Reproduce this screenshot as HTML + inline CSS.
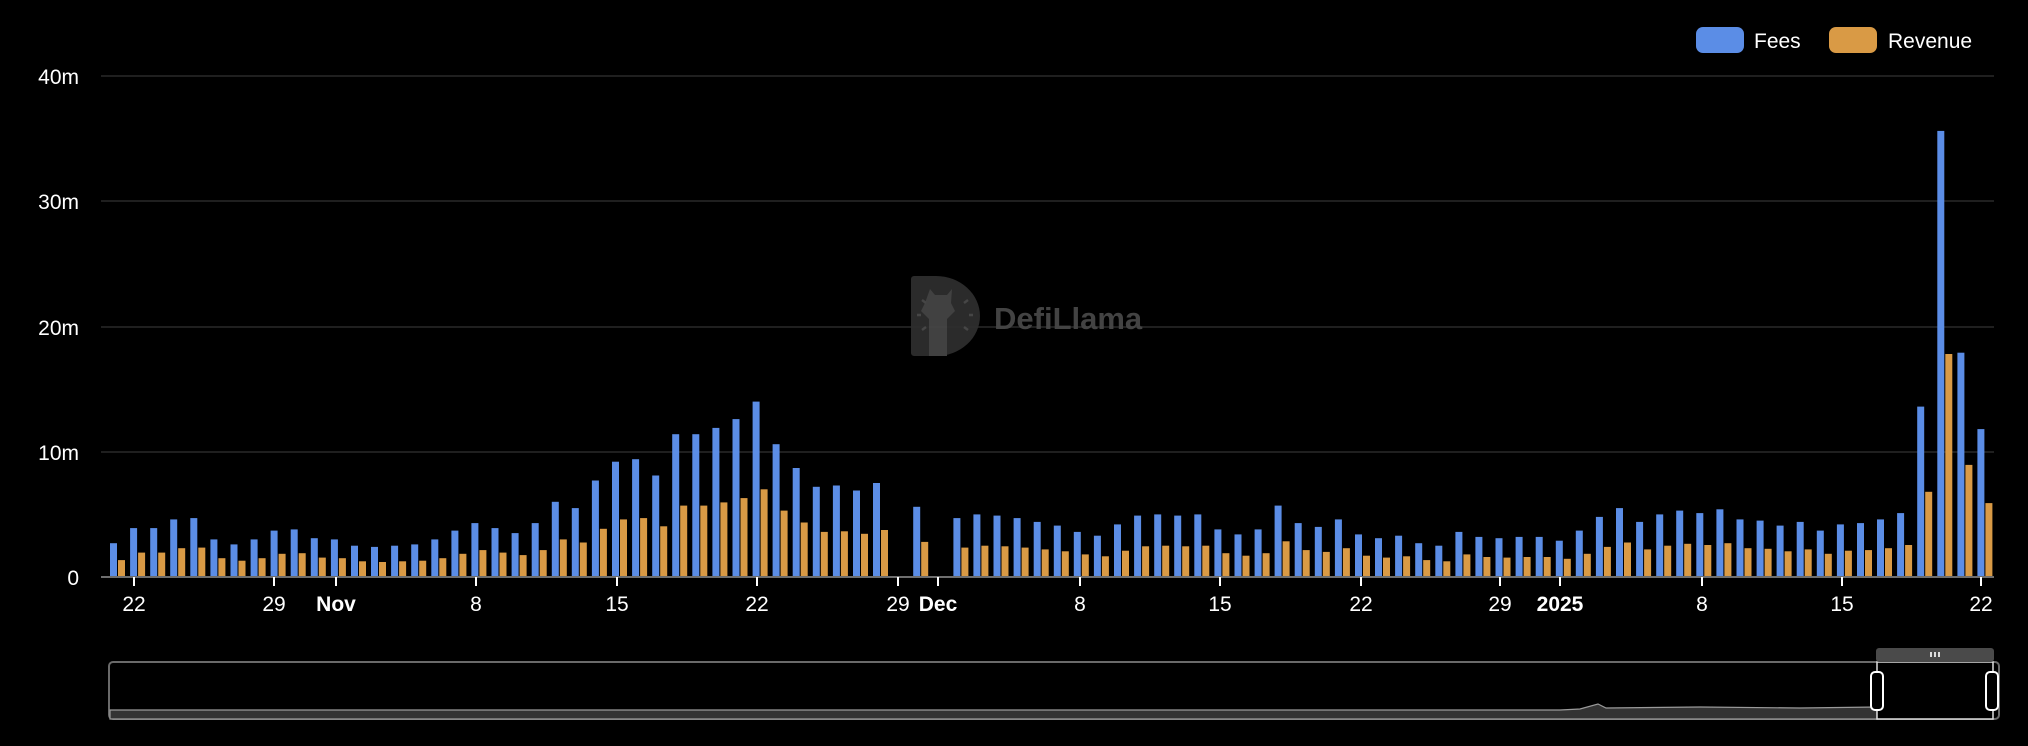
<!DOCTYPE html>
<html><head><meta charset="utf-8"><style>
html,body{margin:0;padding:0;background:#000;width:2028px;height:746px;overflow:hidden}
svg{display:block}
text{font-family:"Liberation Sans",sans-serif}
</style></head><body>
<svg id="s" width="2028" height="746" viewBox="0 0 2028 746" xmlns="http://www.w3.org/2000/svg">
<g stroke="#1f1f1f" stroke-width="2">
<line x1="101" y1="76" x2="1994" y2="76"/><line x1="101" y1="201" x2="1994" y2="201"/>
<line x1="101" y1="327" x2="1994" y2="327"/><line x1="101" y1="452" x2="1994" y2="452"/>
</g>
<g fill="#fff" font-size="21" text-anchor="end">
<text x="79" y="84">40m</text><text x="79" y="209">30m</text><text x="79" y="335">20m</text><text x="79" y="460">10m</text><text x="79" y="585">0</text>
</g>
<!-- watermark -->
<g opacity="0.95">
<path d="M914 276 h22 a44 40 0 0 1 0 80 h-22 a3 3 0 0 1 -3 -3 v-74 a3 3 0 0 1 3 -3z" fill="#2e2e2e"/>
<path d="M930 289 l5 6 h12 l5 -6 l-1 14 l4 8 l-8 8 v37 h-18 v-37 l-8 -8 l4 -8z" fill="#454545"/>
<g stroke="#4a4a4a" stroke-width="2.5"><line x1="922" y1="300" x2="926" y2="303"/><line x1="964" y1="303" x2="968" y2="300"/><line x1="917" y1="315" x2="921" y2="315"/><line x1="969" y1="315" x2="973" y2="315"/><line x1="922" y1="330" x2="926" y2="327"/><line x1="964" y1="327" x2="968" y2="330"/></g>
<text x="994" y="329" font-size="31" font-weight="bold" fill="#474747">DefiLlama</text>
</g>
<g id="bars"></g>
<line x1="101" y1="577" x2="1994" y2="577" stroke="#6e6e6e" stroke-width="2"/>
<g id="ticks"></g>
<!-- legend -->
<rect x="1696" y="27" width="48" height="26" rx="7" fill="#5b8de6"/>
<text x="1754" y="48" font-size="21" fill="#fff">Fees</text>
<rect x="1829" y="27" width="48" height="26" rx="7" fill="#d99a45"/>
<text x="1888" y="48" font-size="21" fill="#fff">Revenue</text>
<!-- slider -->
<rect x="109" y="662" width="1890" height="57" rx="4" fill="none" stroke="#6a6a6a" stroke-width="2"/>
<path id="mini" fill="#333" stroke="#9a9a9a" stroke-width="1.2"/>
<rect x="1877" y="662" width="116" height="57" fill="#000" stroke="#ddd" stroke-width="1.5"/>
<rect x="1876" y="648" width="118" height="14" rx="3" fill="#4a4a4a"/>
<g fill="#ddd"><rect x="1930" y="652" width="2" height="5"/><rect x="1934" y="652" width="2" height="5"/><rect x="1938" y="652" width="2" height="5"/></g>
<rect x="1871" y="672" width="12" height="38" rx="4" fill="#000" stroke="#fff" stroke-width="2"/>
<rect x="1986" y="672" width="12" height="38" rx="4" fill="#000" stroke="#fff" stroke-width="2"/>
</svg>
<script>
var f=[2.7,3.9,3.9,4.6,4.7,3.0,2.6,3.0,3.7,3.8,3.1,3.0,2.5,2.4,2.5,2.6,3.0,3.7,4.3,3.9,3.5,4.3,6.0,5.5,7.7,9.2,9.4,8.1,11.4,11.4,11.9,12.6,14.0,10.6,8.7,7.2,7.3,6.9,7.5,0,5.6,0,4.7,5.0,4.9,4.7,4.4,4.1,3.6,3.3,4.2,4.9,5.0,4.9,5.0,3.8,3.4,3.8,5.7,4.3,4.0,4.6,3.4,3.1,3.3,2.7,2.5,3.6,3.2,3.1,3.2,3.2,2.9,3.7,4.8,5.5,4.4,5.0,5.3,5.1,5.4,4.6,4.5,4.1,4.4,3.7,4.2,4.3,4.6,5.1,13.6,35.6,17.9,11.8];
var ns="http://www.w3.org/2000/svg",b=document.getElementById("bars"),h="";
for(var i=0;i<f.length;i++){if(!f[i])continue;var x=110+i*20.08,v=f[i]*12.53,r=f[i]*0.5*12.53;
h+='<rect x="'+x.toFixed(1)+'" y="'+(577-v).toFixed(1)+'" width="7" height="'+v.toFixed(1)+'" fill="#5b8de6"/>';
h+='<rect x="'+(x+8).toFixed(1)+'" y="'+(577-r).toFixed(1)+'" width="7" height="'+r.toFixed(1)+'" fill="#d99a45"/>';}
b.innerHTML=h;
var t=[[134,"22"],[274,"29"],[336,"Nov",1],[476,"8"],[617,"15"],[757,"22"],[898,"29"],[938,"Dec",1],[1080,"8"],[1220,"15"],[1361,"22"],[1500,"29"],[1560,"2025",1],[1702,"8"],[1842,"15"],[1981,"22"]],th="";
t.forEach(function(a){th+='<line x1="'+a[0]+'" y1="577" x2="'+a[0]+'" y2="586" stroke="#fff" stroke-width="2"/><text x="'+a[0]+'" y="611" font-size="21" fill="#fff" text-anchor="middle"'+(a[2]?' font-weight="bold"':'')+'>'+a[1]+'</text>';});
document.getElementById("ticks").innerHTML=th;
var d="M110 719 L110 710 L1560 710 L1580 709 L1598 704 L1606 708 L1700 707 L1800 708 L1877 707 L1877 719 Z";
document.getElementById("mini").setAttribute("d",d);
</script>
</body></html>
